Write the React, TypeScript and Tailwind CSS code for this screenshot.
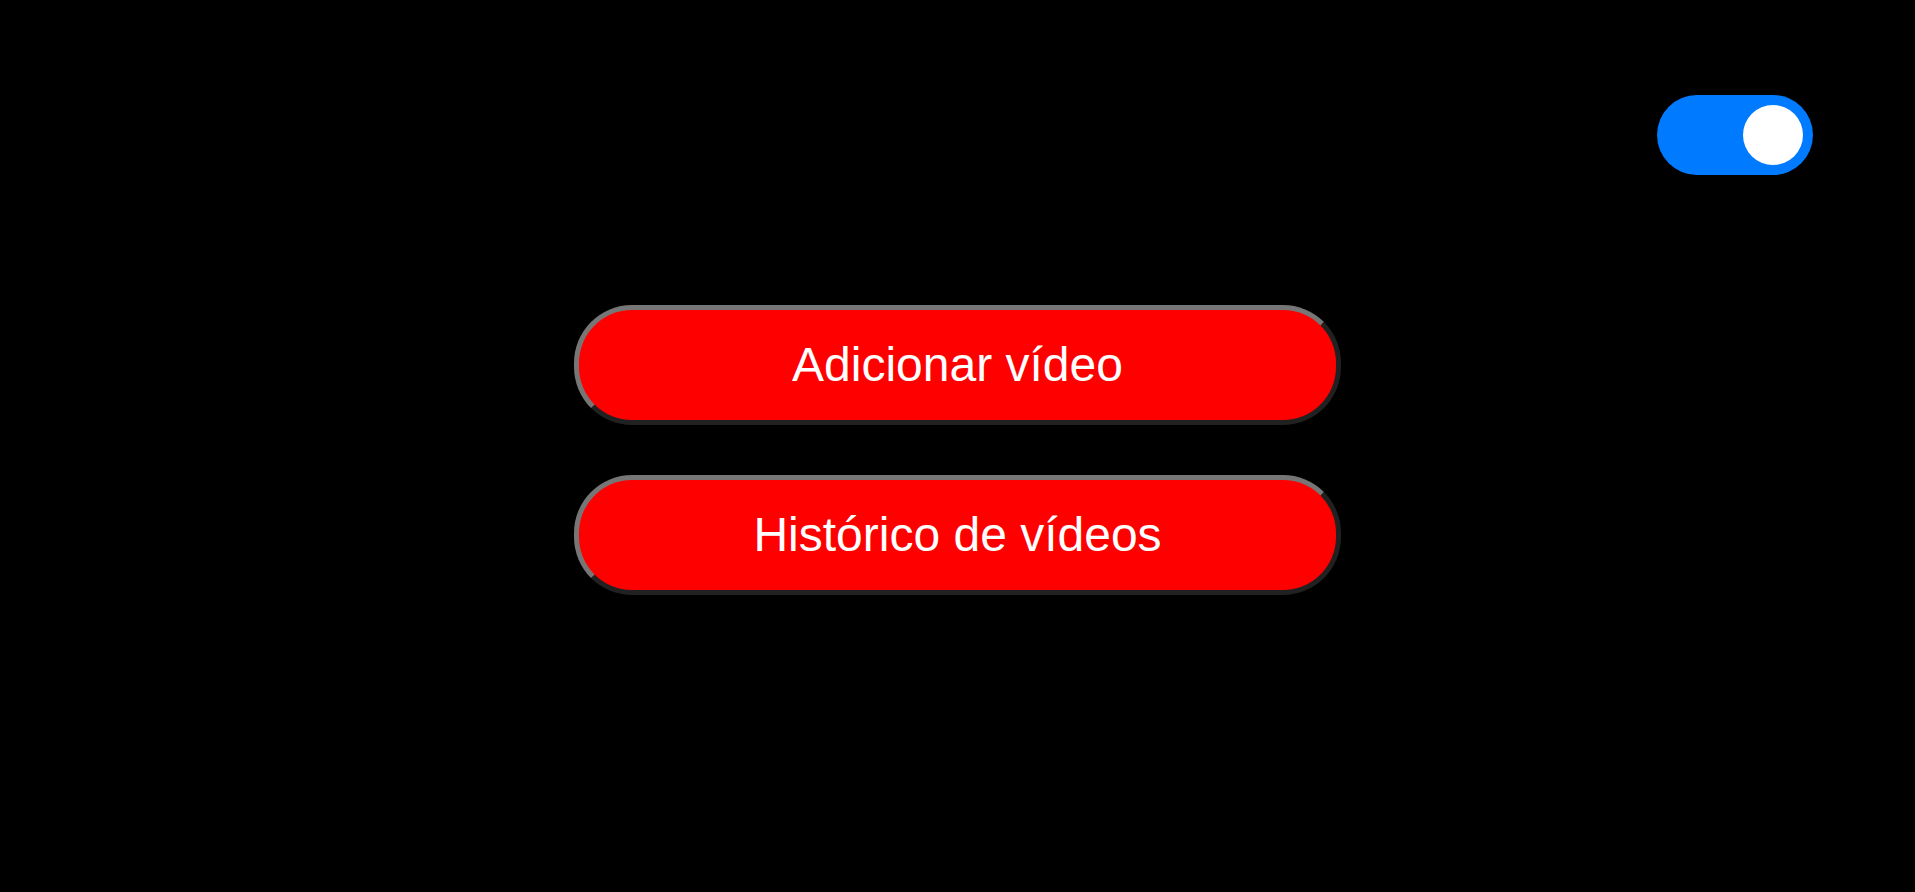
import React, { useState } from 'react';

const MenuButton: React.FC<{ label: string; onClick?: () => void }> = ({ label, onClick }) => (
  <button
    onClick={onClick}
    className="w-[767px] h-[120px] rounded-[58px] bg-[#ff0000] border-[5px] [border-style:outset] border-[#767676] text-white text-[48px] leading-none font-['Liberation_Sans',Arial,sans-serif] flex items-center justify-center"
  >
    {label}
  </button>
);

export default function App() {
  const [enabled, setEnabled] = useState(true);

  return (
    <div className="min-h-[892px] w-full bg-black flex flex-col font-['Liberation_Sans',Arial,sans-serif]">
      {/* Theme toggle */}
      <div className="flex justify-end pt-[95px] pr-[102px]">
        <button
          onClick={() => setEnabled(!enabled)}
          className={`w-[156px] h-[80px] rounded-full flex items-center px-[10px] ${enabled ? 'bg-[#007aff] justify-end' : 'bg-gray-600 justify-start'}`}
          aria-pressed={enabled}
        >
          <span className="block w-[60px] h-[60px] rounded-full bg-white"></span>
        </button>
      </div>

      {/* Main actions */}
      <div className="flex flex-col items-center gap-[50px] mt-[130px]">
        <MenuButton label="Adicionar vídeo" />
        <MenuButton label="Histórico de vídeos" />
      </div>
    </div>
  );
}
